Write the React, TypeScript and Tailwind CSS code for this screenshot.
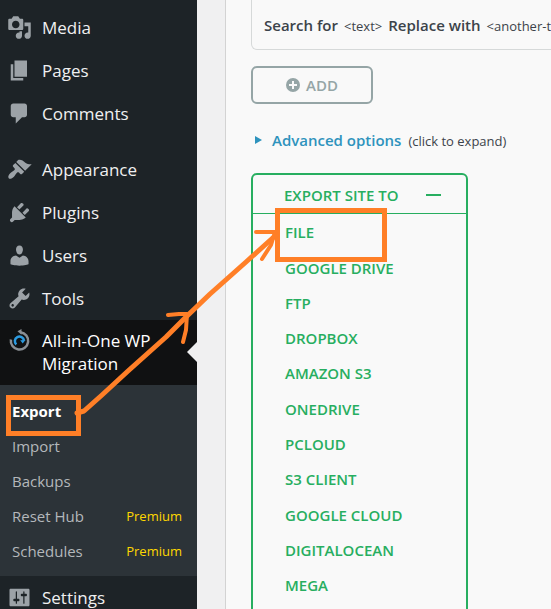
import React from 'react';
import clsx from 'clsx';

interface MenuEntry {
  label: string;
  icon: string;
}

// 20x20 glyph outlines for the admin menu
const ICONS = {
  media:
    'M13 11V4c0-.55-.45-1-1-1h-1.67L9 1H5L3.67 3H2c-.55 0-1 .45-1 1v7c0 .55.45 1 1 1h10c.55 0 1-.45 1-1zM7 4.5c1.66 0 3 1.34 3 3s-1.34 3-3 3-3-1.34-3-3 1.34-3 3-3zM14 6h5v10.5c0 1.38-1.12 2.5-2.5 2.5S14 17.88 14 16.5s1.12-2.5 2.5-2.5c.17 0 .34.02.5.05V9h-3V6zm-4 8.05V13h2v3.5c0 1.38-1.12 2.5-2.5 2.5S7 17.88 7 16.5 8.12 14 9.5 14c.17 0 .34.02.5.05z',
  pages: 'M6 15V2h10v13H6zm-1 1h8v2H3V5h2v11z',
  comments: 'M5 2h9c1.1 0 2 .9 2 2v7c0 1.1-.9 2-2 2h-2l-5 5v-5H5c-1.1 0-2-.9-2-2V4c0-1.1.9-2 2-2z',
  appearance:
    'M14.48 11.06L7.41 3.99l1.5-1.5c.5-.56 2.3-.47 3.51.32 1.21.8 1.43 1.28 2.91 2.1 1.18.64 2.45 1.26 4.45.85zm-.71.71L6.7 4.7 4.93 6.47c-.39.39-.39 1.02 0 1.41l1.06 1.06c.39.39.39 1.03 0 1.42-.6.6-1.43 1.11-2.21 1.69-.35.26-.7.53-1.01.84C1.43 14.23.4 16.08 1.4 17.07c.99 1 2.84-.03 4.18-1.36.31-.31.58-.66.85-1.02.57-.78 1.08-1.61 1.69-2.21.39-.39 1.02-.39 1.41 0l1.06 1.06c.39.39 1.02.39 1.41 0z',
  plugins:
    'M13.11 4.36L9.87 7.6 8 5.73l3.24-3.24c.35-.34 1.05-.2 1.56.32.52.51.66 1.21.31 1.55zm-8 1.77l.91-1.12 9.01 9.01-1.19.84c-.71.71-2.63 1.16-3.82 1.16H6.14L4.9 17.26c-.59.59-1.54.59-2.12 0-.59-.58-.59-1.53 0-2.12l1.24-1.24v-3.88c0-1.13.4-3.19 1.09-3.89zm7.26 3.97l3.24-3.24c.34-.35 1.04-.21 1.55.31.52.51.66 1.21.31 1.55l-3.24 3.25z',
  users:
    'M10 9.25c-2.27 0-2.73-3.44-2.73-3.44C7 4.02 7.82 2 9.97 2c2.16 0 2.98 2.02 2.71 3.81 0 0-.41 3.44-2.68 3.44zm0 2.57L12.72 10c2.39 0 4.52 2.33 4.52 4.53v2.49s-3.65 1.13-7.24 1.13c-3.65 0-7.24-1.13-7.24-1.13v-2.49c0-2.25 1.94-4.48 4.47-4.48z',
  tools:
    'M16.68 9.77c-1.34 1.34-3.3 1.67-4.95.99l-5.41 6.52c-.99.99-2.59.99-3.58 0s-.99-2.59 0-3.57l6.52-5.42c-.68-1.65-.35-3.61.99-4.95 1.28-1.28 3.12-1.62 4.72-1.06l-2.89 2.89 2.82 2.82 2.86-2.87c.53 1.58.18 3.39-1.08 4.65zM3.81 16.21c.4.39 1.04.39 1.43 0 .4-.4.4-1.04 0-1.43-.39-.4-1.03-.4-1.43 0-.39.39-.39 1.03 0 1.43z',
  settings:
    'M18 16V4c0-.55-.45-1-1-1H3c-.55 0-1 .45-1 1v12c0 .55.45 1 1 1h14c.55 0 1-.45 1-1zM8 11h1c.55 0 1 .45 1 1s-.45 1-1 1H8v1.5c0 .28-.22.5-.5.5s-.5-.22-.5-.5V13H6c-.55 0-1-.45-1-1s.45-1 1-1h1V5.5c0-.28.22-.5.5-.5s.5.22.5.5V11zm5-2h-1c-.55 0-1-.45-1-1s.45-1 1-1h1V5.5c0-.28.22-.5.5-.5s.5.22.5.5V7h1c.55 0 1 .45 1 1s-.45 1-1 1h-1v5.5c0 .28-.22.5-.5.5s-.5-.22-.5-.5V9z',
};

const CONTENT_MENU: MenuEntry[] = [
  { label: 'Media', icon: ICONS.media },
  { label: 'Pages', icon: ICONS.pages },
  { label: 'Comments', icon: ICONS.comments },
];

const ADMIN_MENU: MenuEntry[] = [
  { label: 'Appearance', icon: ICONS.appearance },
  { label: 'Plugins', icon: ICONS.plugins },
  { label: 'Users', icon: ICONS.users },
  { label: 'Tools', icon: ICONS.tools },
];

const SUBMENU = [
  { label: 'Export', current: true },
  { label: 'Import' },
  { label: 'Backups' },
  { label: 'Reset Hub', premium: true },
  { label: 'Schedules', premium: true },
];

const TARGETS = [
  'File',
  'Google Drive',
  'FTP',
  'Dropbox',
  'Amazon S3',
  'OneDrive',
  'pCloud',
  'S3 Client',
  'Google Cloud',
  'DigitalOcean',
  'Mega',
];

const MenuLink: React.FC<{ entry: MenuEntry }> = ({ entry }) => (
  <li>
    <a href="#" className="flex h-[43px] items-center gap-[10px] pl-[7px] text-[17px] text-[#f0f0f1]">
      <svg viewBox="0 0 20 20" className="size-[25px] shrink-0 fill-[#9ca2a7]" aria-hidden="true">
        <path d={entry.icon} />
      </svg>
      {entry.label}
    </a>
  </li>
);

const MigrationIcon = () => (
  <svg viewBox="0 0 25 25" className="size-[25px] shrink-0" fill="none" aria-hidden="true">
    <path d="M13.5 3.2A8.7 8.7 0 1 1 3.9 10.5" stroke="#8a8f94" strokeWidth="2.5" />
    <path d="M14.5 0v5.8l-4-3.6z" fill="#8a8f94" />
    <path d="M9.3 15.5A4.6 4.6 0 1 1 17 11.5" stroke="#2c9be0" strokeWidth="2.5" />
    <path d="M13.2 11.3l5.3-.3-2.8 3.4z" fill="#2c9be0" />
  </svg>
);

const Sidebar = () => (
  <nav className="w-[197px] shrink-0 overflow-hidden bg-[#1d2327] pt-[6px]">
    <ul className="mb-[13px]">
      {CONTENT_MENU.map((entry) => (
        <MenuLink key={entry.label} entry={entry} />
      ))}
    </ul>
    <ul>
      {ADMIN_MENU.map((entry) => (
        <MenuLink key={entry.label} entry={entry} />
      ))}
      <li>
        <a
          href="#"
          className="relative flex h-[65px] items-start gap-[10px] bg-[#101112] pt-[9px] pl-[7px] text-[17px] leading-[23px] text-white"
        >
          <MigrationIcon />
          <span>
            All-in-One WP
            <br />
            Migration
          </span>
          <span className="absolute top-[22px] right-0 size-0 border-y-10 border-r-10 border-y-transparent border-r-[#f0f0f1]" />
        </a>
        <ul className="bg-[#2c3338] pt-[9px] pb-[7px]">
          {SUBMENU.map((item) => (
            <li key={item.label}>
              <a
                href="#"
                className={clsx(
                  'flex h-[35px] items-center justify-between pr-[15px] pl-[12px] text-[15px]',
                  item.current ? 'font-bold text-white' : 'text-[#b4b8bb]'
                )}
              >
                {item.label}
                {item.premium && <span className="text-[13px] text-[#ffd700]">Premium</span>}
              </a>
            </li>
          ))}
        </ul>
      </li>
      <MenuLink entry={{ label: 'Settings', icon: ICONS.settings }} />
    </ul>
  </nav>
);

const ExportPanel = () => (
  <main className="ml-[28px] min-w-0 flex-1 overflow-hidden border-l border-[#d3d3d3] bg-[#f9f9f9] pl-[25px]">
    <div className="-mr-2 flex h-[50px] items-baseline gap-[6px] overflow-hidden rounded-b-md border border-t-0 border-[#d6d9d9] pt-[13px] pl-[12px] leading-[24px] whitespace-nowrap text-[#3c434a]">
      <span className="text-[15px] font-semibold">Search for</span>
      <span className="text-[13px]">&lt;text&gt;</span>
      <span className="text-[15px] font-semibold">Replace with</span>
      <span className="text-[13px]">&lt;another-text&gt;</span>
    </div>

    <button
      type="button"
      className="mt-4 flex h-[38px] w-[122px] items-center justify-center gap-[6px] rounded-md border-2 border-[#95a5a6] text-[15px] font-semibold text-[#95a5a6]"
    >
      <svg viewBox="0 0 14 14" className="size-[14px]" aria-hidden="true">
        <circle cx="7" cy="7" r="7" fill="#95a5a6" />
        <path d="M7 3v8M3 7h8" stroke="#f9f9f9" strokeWidth="2" />
      </svg>
      ADD
    </button>

    <button
      type="button"
      className="mt-[24px] flex h-[24px] items-baseline pl-[4px] leading-[24px] whitespace-nowrap text-[#3c434a]"
    >
      <svg viewBox="0 0 7 8" className="mr-[10px] h-[8px] w-[7px] self-center fill-[#2e93bd]" aria-hidden="true">
        <path d="M0 0l7 4-7 4z" />
      </svg>
      <span className="mr-[7px] text-[15px] font-semibold text-[#2e93bd]">Advanced options</span>
      <span className="text-[13px]">(click to expand)</span>
    </button>

    <section className="mt-[21px] h-[460px] w-[217px] rounded-md border-2 border-[#27ae60] text-[15px] font-semibold text-[#27ae60] uppercase">
      <button
        type="button"
        className="flex h-[39px] w-full items-center justify-between border-b border-[#27ae60] pt-[2px] pr-[25px] pl-[31px] font-semibold uppercase"
      >
        Export site to
        <span className="h-[2px] w-[15px] bg-[#27ae60]" />
      </button>
      <ul className="grid h-[389px] auto-rows-fr pt-px">
        {TARGETS.map((target) => (
          <li key={target}>
            <a href="#" className="flex h-full items-center pl-[32px]">
              {target}
            </a>
          </li>
        ))}
      </ul>
    </section>
  </main>
);

// Hand-drawn markers pointing from the Export entry to the File target
const Annotations = () => (
  <svg
    width="551"
    height="609"
    className="pointer-events-none absolute top-0 left-0"
    fill="none"
    stroke="#ff7f27"
    strokeWidth="5"
    aria-hidden="true"
  >
    <rect x="8.5" y="397.5" width="70" height="36" />
    <rect x="277.5" y="210.5" width="107" height="49" />
    <path
      d="M77 413l7-2 18-16 26-24 38-34 20-20 24-23 36-32 30-27"
      strokeLinecap="round"
      strokeLinejoin="round"
    />
    <path
      d="M168 315l11-1h8l-1 16-3 12M256 232h19l-4 13-9 14"
      strokeWidth="4"
      strokeLinecap="round"
      strokeLinejoin="round"
    />
  </svg>
);

export default function App() {
  return (
    <div className="relative flex h-screen overflow-hidden bg-[#f0f0f1] font-['Open_Sans','Noto_Sans',sans-serif]">
      <Sidebar />
      <ExportPanel />
      <Annotations />
    </div>
  );
}
